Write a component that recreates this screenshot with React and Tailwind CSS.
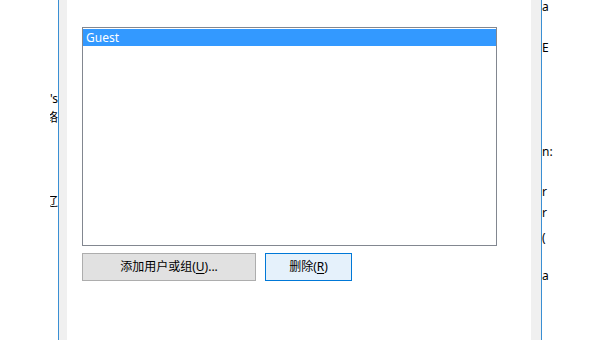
import React from 'react';

const font = { fontFamily: '"Noto Sans", "Noto Sans CJK SC", sans-serif' };

const Underlined = ({ children }) => <span className="underline underline-offset-2">{children}</span>;

export default function App() {
  return (
    <div className="flex h-[340px] w-[600px] overflow-hidden bg-white text-[12px] text-black" style={font}>
      {/* window behind, left part */}
      <div className="flex w-[58px] shrink-0 justify-end">
        <div className="flex w-[8px] flex-col overflow-hidden leading-[14px]">
          <div className="mt-[92px] h-[14px] whitespace-nowrap">'s</div>
          <div className="mt-[5px] h-[14px] -ml-[4px] whitespace-nowrap">络</div>
          <div className="mt-[70px] h-[14px] -ml-[4px] whitespace-nowrap">辽</div>
        </div>
      </div>
      <div className="w-[1px] shrink-0 bg-[#3a8fd3]" />
      <div className="w-[8px] shrink-0 bg-[#f0f0f0]" />

      {/* dialog body */}
      <div className="w-[464px] shrink-0 bg-white pl-[15px] pt-[27px]">
        <div className="h-[219px] w-[415px] border border-[#828790] pt-[1px]">
          <div className="h-[17px] bg-[#3399ff] pl-[3px] leading-[17px] text-white">Guest</div>
        </div>
        <div className="mt-[7px] flex gap-[9px]">
          <button className="h-[28px] w-[174px] border border-[#adadad] bg-[#e1e1e1] text-[12px]">
            添加用户或组(<Underlined>U</Underlined>)...
          </button>
          <button className="h-[28px] w-[87px] border border-[#0078d7] bg-[#e5f1fb] text-[12px]">
            删除(<Underlined>R</Underlined>)
          </button>
        </div>
      </div>

      <div className="w-[10px] shrink-0 bg-[#f0f0f0]" />
      <div className="w-[1px] shrink-0 bg-[#3a8fd3]" />

      {/* window behind, right part */}
      <div className="flex-1">
        <div className="flex flex-col leading-[14px]">
          <div className="h-[14px]">a</div>
          <div className="mt-[27px] h-[14px]">E</div>
          <div className="mt-[90px] h-[14px]">n:</div>
          <div className="mt-[26px] h-[14px]">r</div>
          <div className="mt-[7px] h-[14px]">r</div>
          <div className="mt-[11px] h-[14px]">(</div>
          <div className="mt-[24px] h-[14px]">a</div>
        </div>
      </div>
    </div>
  );
}
